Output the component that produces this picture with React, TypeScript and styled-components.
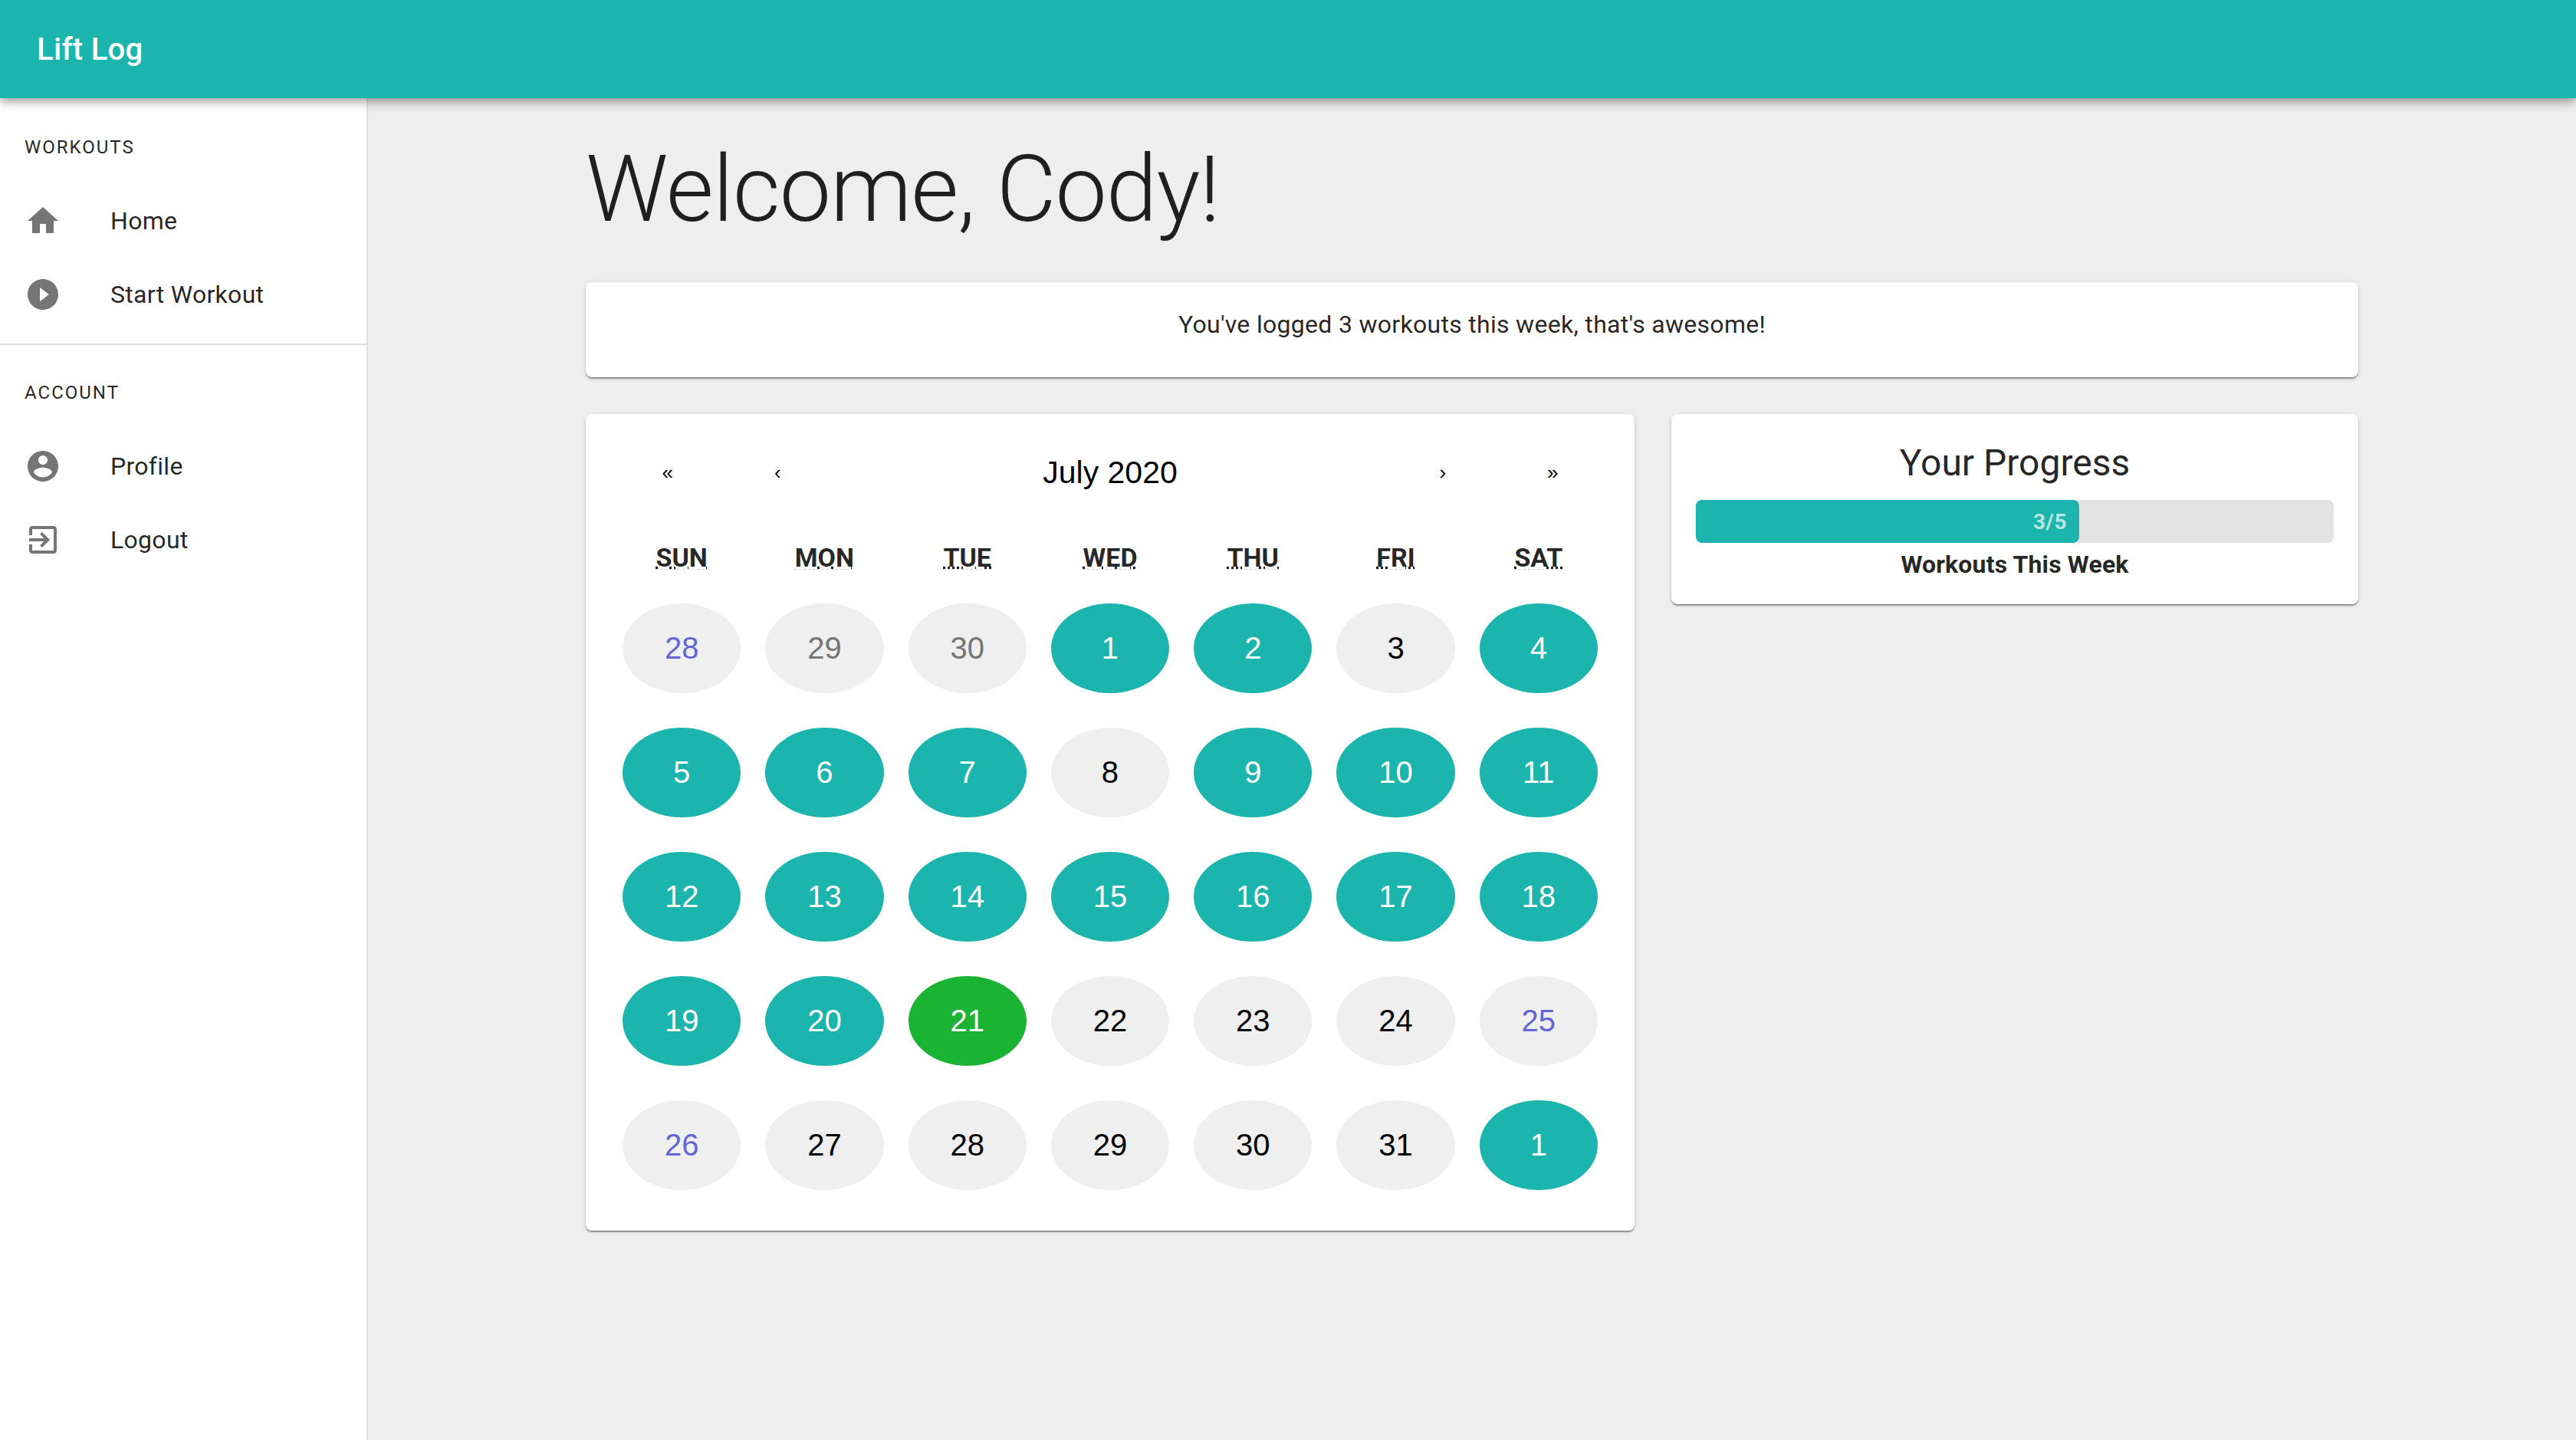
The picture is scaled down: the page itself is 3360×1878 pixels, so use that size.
import styled, { createGlobalStyle } from "styled-components";

const TEAL = "#1cb5ae";

const GlobalStyle = createGlobalStyle`
  html, body {
    margin: 0;
    padding: 0;
    background: #eeeeee;
    font-family: Roboto, "Liberation Sans", sans-serif;
    color: rgba(0, 0, 0, 0.87);
  }
`;

type DayKind = "logged" | "today" | "plain" | "weekend" | "muted";

const weekdays = ["SUN", "MON", "TUE", "WED", "THU", "FRI", "SAT"];

const days: { n: number; kind: DayKind }[] = [
  { n: 28, kind: "weekend" },
  { n: 29, kind: "muted" },
  { n: 30, kind: "muted" },
  { n: 1, kind: "logged" },
  { n: 2, kind: "logged" },
  { n: 3, kind: "plain" },
  { n: 4, kind: "logged" },
  { n: 5, kind: "logged" },
  { n: 6, kind: "logged" },
  { n: 7, kind: "logged" },
  { n: 8, kind: "plain" },
  { n: 9, kind: "logged" },
  { n: 10, kind: "logged" },
  { n: 11, kind: "logged" },
  { n: 12, kind: "logged" },
  { n: 13, kind: "logged" },
  { n: 14, kind: "logged" },
  { n: 15, kind: "logged" },
  { n: 16, kind: "logged" },
  { n: 17, kind: "logged" },
  { n: 18, kind: "logged" },
  { n: 19, kind: "logged" },
  { n: 20, kind: "logged" },
  { n: 21, kind: "today" },
  { n: 22, kind: "plain" },
  { n: 23, kind: "plain" },
  { n: 24, kind: "plain" },
  { n: 25, kind: "weekend" },
  { n: 26, kind: "weekend" },
  { n: 27, kind: "plain" },
  { n: 28, kind: "plain" },
  { n: 29, kind: "plain" },
  { n: 30, kind: "plain" },
  { n: 31, kind: "plain" },
  { n: 1, kind: "logged" },
];

const icons = {
  home: "M10 20v-6h4v6h5v-8h3L12 3 2 12h3v8z",
  play: "M12 2C6.48 2 2 6.48 2 12s4.48 10 10 10 10-4.48 10-10S17.52 2 12 2zm-2 14.5v-9l6 4.5-6 4.5z",
  profile:
    "M12 2C6.48 2 2 6.48 2 12s4.48 10 10 10 10-4.48 10-10S17.52 2 12 2zm0 3c1.66 0 3 1.34 3 3s-1.34 3-3 3-3-1.34-3-3 1.34-3 3-3zm0 14.2c-2.5 0-4.71-1.28-6-3.22.03-1.99 4-3.08 6-3.08 1.99 0 5.97 1.09 6 3.08-1.29 1.94-3.5 3.22-6 3.22z",
  logout:
    "M10.09 15.59L11.5 17l5-5-5-5-1.41 1.41L12.67 11H3v2h9.67l-2.58 2.59zM19 3H5c-1.11 0-2 .9-2 2v4h2V5h14v14H5v-4H3v4c0 1.1.89 2 2 2h14c1.1 0 2-.9 2-2V5c0-1.1-.9-2-2-2z",
};

function NavItem({ icon, label }: { icon: string; label: string }) {
  return (
    <Item>
      <ItemIcon viewBox="0 0 24 24">
        <path d={icon} />
      </ItemIcon>
      <span>{label}</span>
    </Item>
  );
}

function App() {
  return (
    <>
      <GlobalStyle />
      <AppBar>
        <Brand>Lift Log</Brand>
      </AppBar>
      <Shell>
        <Sidebar>
          <NavGroup>
            <Subheader>WORKOUTS</Subheader>
            <NavItem icon={icons.home} label="Home" />
            <NavItem icon={icons.play} label="Start Workout" />
          </NavGroup>
          <NavGroup>
            <Subheader>ACCOUNT</Subheader>
            <NavItem icon={icons.profile} label="Profile" />
            <NavItem icon={icons.logout} label="Logout" />
          </NavGroup>
        </Sidebar>
        <Main>
          <Content>
            <Heading>Welcome, Cody!</Heading>
            <MessageCard>You've logged 3 workouts this week, that's awesome!</MessageCard>
            <Columns>
              <CalendarCard>
                <CalendarNav>
                  <NavArrow>«</NavArrow>
                  <NavArrow>‹</NavArrow>
                  <MonthLabel>July 2020</MonthLabel>
                  <NavArrow>›</NavArrow>
                  <NavArrow>»</NavArrow>
                </CalendarNav>
                <WeekRow>
                  {weekdays.map((d) => (
                    <Weekday key={d}>
                      <abbr>{d}</abbr>
                    </Weekday>
                  ))}
                </WeekRow>
                <DayGrid>
                  {days.map((d, idx) => (
                    <Day key={idx} $kind={d.kind}>
                      {d.n}
                    </Day>
                  ))}
                </DayGrid>
              </CalendarCard>
              <ProgressCard>
                <ProgressTitle>Your Progress</ProgressTitle>
                <Track>
                  <Fill style={{ width: `${(3 / 5) * 100 + 0.1}%` }}>3/5</Fill>
                </Track>
                <ProgressCaption>Workouts This Week</ProgressCaption>
              </ProgressCard>
            </Columns>
          </Content>
        </Main>
      </Shell>
    </>
  );
}

export default App;

const AppBar = styled.header`
  position: relative;
  z-index: 2;
  height: 128px;
  display: flex;
  align-items: center;
  padding: 0 48px;
  background: ${TEAL};
  box-shadow: 0 4px 8px -2px rgba(0, 0, 0, 0.2), 0 8px 10px 0 rgba(0, 0, 0, 0.14),
    0 2px 20px 0 rgba(0, 0, 0, 0.12);
`;

const Brand = styled.div`
  font-size: 40px;
  font-weight: 500;
  letter-spacing: 0.3px;
  color: #ffffff;
`;

const Shell = styled.div`
  display: flex;
  height: 1750px;
`;

const Sidebar = styled.nav`
  width: 478px;
  flex: none;
  background: #ffffff;
  border-right: 2px solid #e0e0e0;
`;

const NavGroup = styled.div`
  padding: 16px 0 16px;

  & + & {
    border-top: 2px solid #e0e0e0;
    padding-top: 14px;
  }
`;

const Subheader = styled.div`
  height: 96px;
  padding-left: 32px;
  display: flex;
  align-items: center;
  font-size: 24px;
  letter-spacing: 2px;
`;

const Item = styled.div`
  height: 96px;
  padding-left: 32px;
  display: flex;
  align-items: center;
  gap: 64px;
  font-size: 32px;
  letter-spacing: 0.3px;
`;

const ItemIcon = styled.svg`
  width: 48px;
  height: 48px;
  fill: #757575;
`;

const Main = styled.main`
  flex: 1;
  display: flex;
  justify-content: center;
`;

const Content = styled.div`
  width: 2312px;
`;

const Heading = styled.h1`
  margin: 0;
  padding-top: 42px;
  height: 240px;
  box-sizing: border-box;
  font-size: 120px;
  font-weight: 300;
  line-height: 154px;
  letter-spacing: -1px;
`;

const Card = styled.section`
  background: #ffffff;
  border-radius: 8px;
  box-shadow: 0 2px 2px -1px rgba(0, 0, 0, 0.4), 0 2px 2px 0 rgba(0, 0, 0, 0.2),
    0 1px 6px 0 rgba(0, 0, 0, 0.12);
`;

const MessageCard = styled(Card)`
  height: 124px;
  display: flex;
  align-items: center;
  justify-content: center;
  padding-bottom: 15px;
  box-sizing: border-box;
  font-size: 32px;
  letter-spacing: 0.3px;
`;

const Columns = styled.div`
  margin-top: 48px;
  display: grid;
  grid-template-columns: 1368px 896px;
  gap: 48px;
  align-items: start;
`;

const CalendarCard = styled(Card)`
  height: 1065px;
  box-sizing: border-box;
  padding: 32px 32px 0;
  font-family: "Liberation Sans", Arial, sans-serif;
  color: #000000;
`;

const CalendarNav = styled.div`
  display: grid;
  grid-template-columns: repeat(2, 143.5px) 1fr repeat(2, 143.5px);
  align-items: center;
  height: 88px;
  padding: 0 3px;
`;

const NavArrow = styled.div`
  text-align: center;
  font-size: 26px;
`;

const MonthLabel = styled.div`
  text-align: center;
  font-size: 41px;
`;

const WeekRow = styled.div`
  margin-top: 47px;
  display: grid;
  grid-template-columns: repeat(7, 1fr);
  text-align: center;
  font-family: Roboto, sans-serif;
  font-size: 34px;
  font-weight: 700;
  color: rgba(0, 0, 0, 0.87);

  abbr {
    text-decoration: underline dotted;
    text-underline-offset: 0;
  }
`;

const Weekday = styled.div`
  line-height: 40px;
`;

const DayGrid = styled.div`
  margin-top: 40px;
  display: grid;
  grid-template-columns: repeat(7, 1fr);
  grid-auto-rows: 162px;
`;

const dayBg: Record<DayKind, string> = {
  logged: TEAL,
  today: "#1bb334",
  plain: "#efefef",
  weekend: "#efefef",
  muted: "#efefef",
};

const dayColor: Record<DayKind, string> = {
  logged: "#ffffff",
  today: "#ffffff",
  plain: "#000000",
  weekend: "#6365d6",
  muted: "#757575",
};

const Day = styled.div<{ $kind: DayKind }>`
  height: 117px;
  margin: 0 16px;
  border-radius: 50%;
  display: flex;
  align-items: center;
  justify-content: center;
  font-size: 40px;
  background: ${(p) => dayBg[p.$kind]};
  color: ${(p) => dayColor[p.$kind]};
`;

const ProgressCard = styled(Card)`
  height: 248px;
  box-sizing: border-box;
  padding: 32px 32px 0;
  text-align: center;
`;

const ProgressTitle = styled.div`
  font-size: 48px;
  line-height: 64px;
  margin-bottom: 16px;
`;

const Track = styled.div`
  height: 56px;
  border-radius: 8px;
  background: #e3e3e3;
`;

const Fill = styled.div`
  height: 100%;
  box-sizing: border-box;
  padding-right: 16px;
  border-radius: 8px;
  background: ${TEAL};
  display: flex;
  align-items: center;
  justify-content: flex-end;
  font-size: 28px;
  font-weight: 700;
  letter-spacing: 0.5px;
  color: rgba(255, 255, 255, 0.7);
`;

const ProgressCaption = styled.div`
  margin-top: 8px;
  font-size: 32px;
  line-height: 40px;
  font-weight: 700;
  letter-spacing: 0.15px;
`;
